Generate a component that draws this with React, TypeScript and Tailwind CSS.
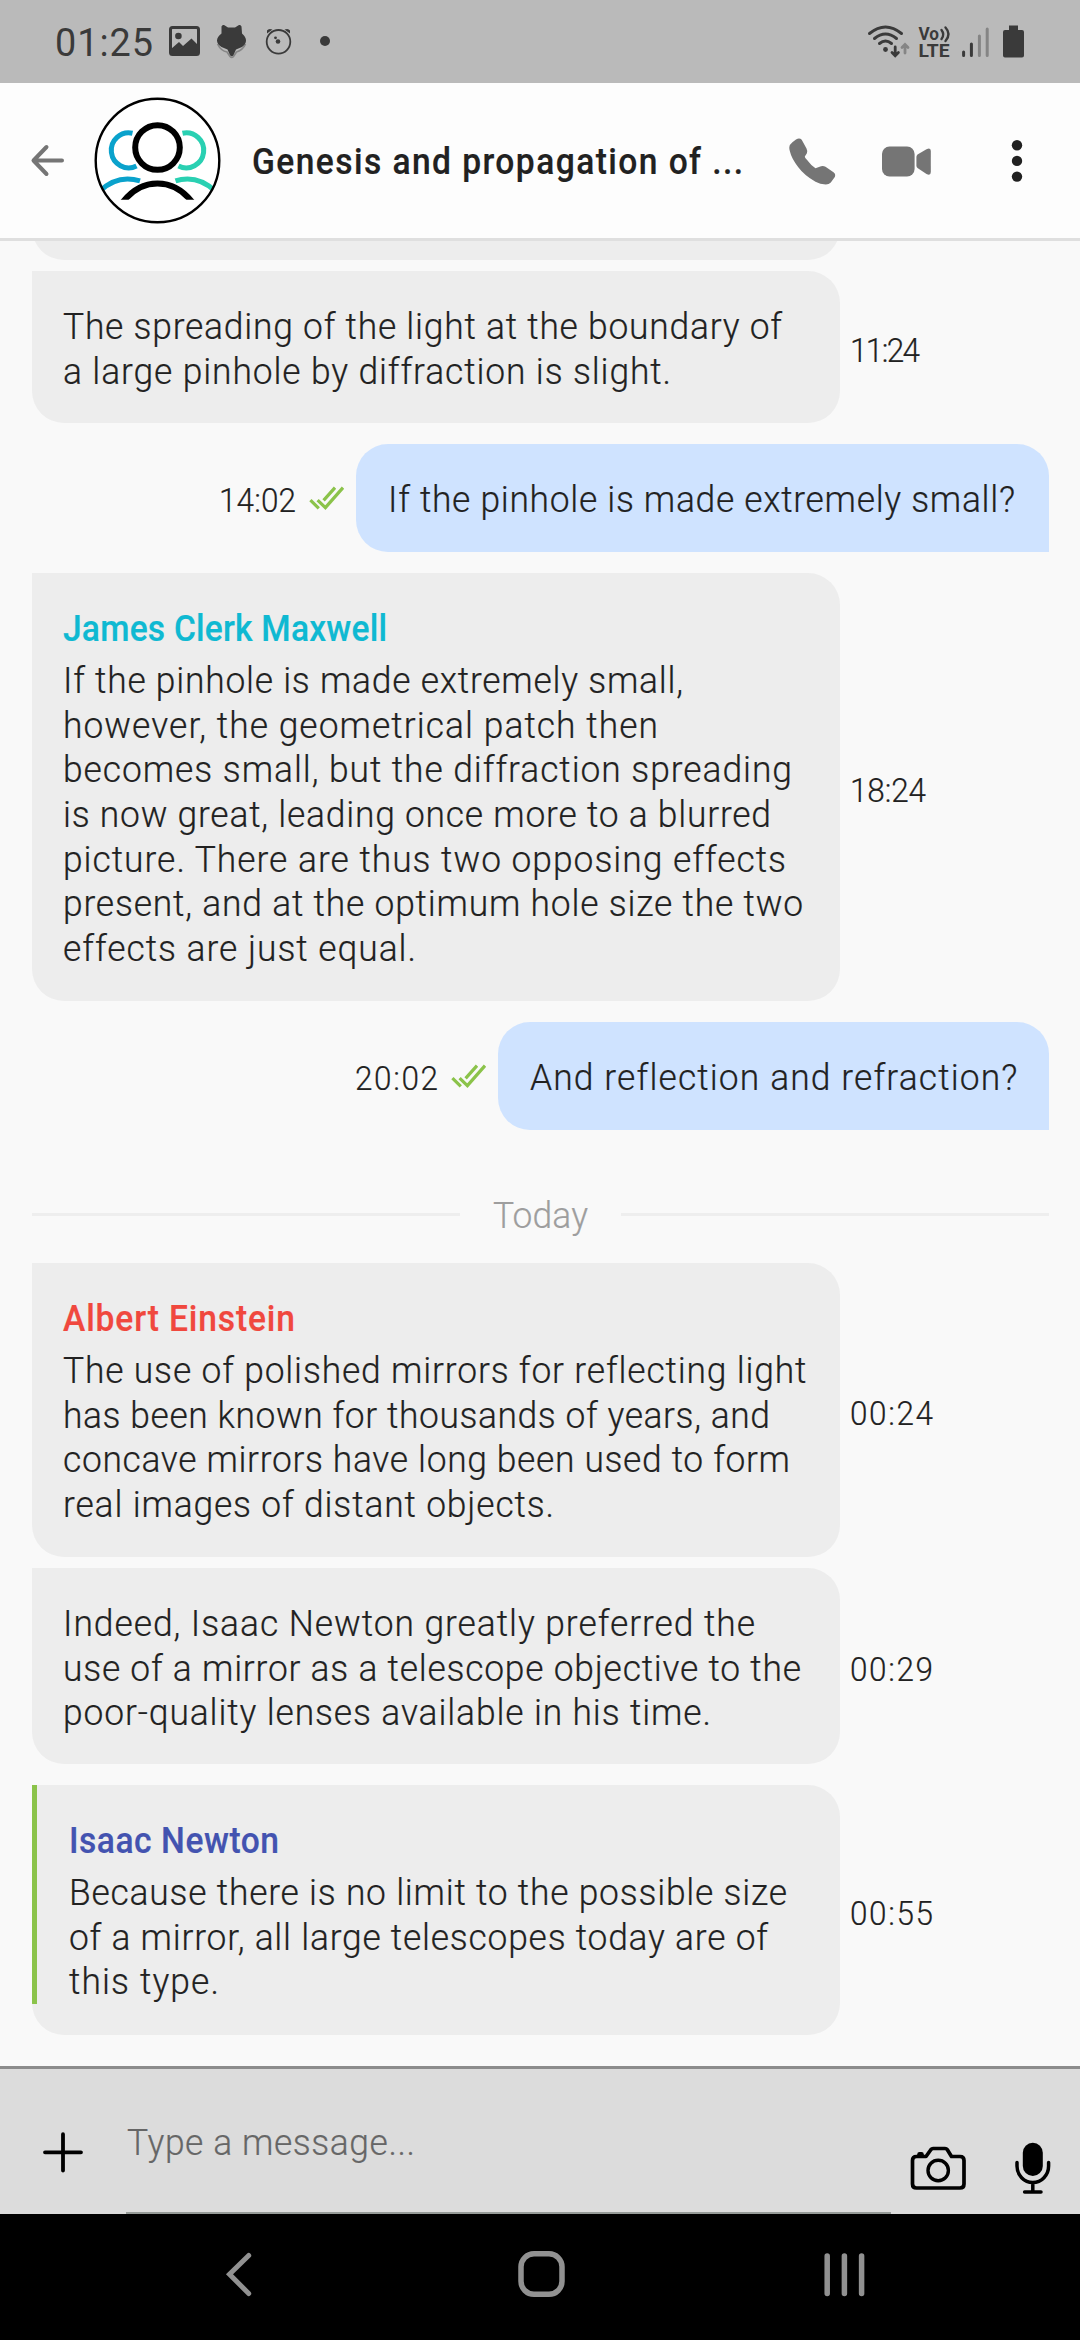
import { useLayoutEffect, useRef, type ReactNode } from "react";

/** A single line of slightly condensed text whose tracking is adjusted so that it spans `width` pixels. */
function Line({
  text,
  width,
  className = "",
  bold = false,
}: {
  text: string;
  width: number;
  className?: string;
  bold?: boolean;
}) {
  const ref = useRef<HTMLSpanElement>(null);
  useLayoutEffect(() => {
    const el = ref.current;
    if (!el) return;
    el.style.letterSpacing = "0px";
    const drawn = el.getBoundingClientRect().width;
    const scale = drawn / el.offsetWidth;
    el.style.letterSpacing = `${(width - drawn) / scale / (text.length - 1)}px`;
  }, [text, width]);
  return (
    <div className={`whitespace-nowrap ${className}`}>
      <div style={{ width }}>
        <span ref={ref} className={`inline-block origin-left ${bold ? "scale-x-92 font-medium" : "scale-x-97"}`}>
          {text}
        </span>
      </div>
    </div>
  );
}

type TextLine = [string, number];

function Received({
  lines,
  sender,
  time,
  timeWidth,
  className,
  unread = false,
}: {
  lines: TextLine[];
  sender?: { name: string; width: number; color: string };
  time: string;
  timeWidth: number;
  className: string;
  unread?: boolean;
}) {
  return (
    <div className={`flex shrink-0 items-center ${className}`}>
      <div
        className={`relative h-full w-[808px] overflow-hidden rounded-[32px] rounded-tl-none bg-[#ededed] pt-[34px] ${unread ? "pl-[37px]" : "pl-[31px]"}`}
      >
        {unread && <div className="absolute top-0 bottom-[31px] left-0 w-[5px] bg-[#8bc34a]" />}
        {sender && <Line bold text={sender.name} width={sender.width} className={`mb-[7.6px] ${sender.color}`} />}
        {lines.map(([t, w]) => (
          <Line key={t} text={t} width={w} />
        ))}
      </div>
      <Line text={time} width={timeWidth} className="ml-[10px] pt-[8px] text-[32.5px]" />
    </div>
  );
}

function Checks() {
  return (
    <svg width="36" height="24" viewBox="0 0 36 24" fill="none" stroke="#8bc34a" strokeWidth="3.2">
      <path d="M1.4 14.2 9.8 22.4M8.6 14.2 16.4 21.600 34 1.6M14.6 14.400 26 1.6" />
    </svg>
  );
}

function Sent({
  text,
  width,
  time,
  timeWidth,
  bubble,
  className,
}: {
  text: string;
  width: number;
  time: string;
  timeWidth: number;
  bubble: string;
  className: string;
}) {
  return (
    <div className={`flex h-[108px] shrink-0 items-center justify-end ${className}`}>
      <Line text={time} width={timeWidth} className="mr-[13px] pt-[6px] text-[32.5px]" />
      <Checks />
      <div className={`ml-[11px] h-full rounded-[32px] rounded-br-none bg-[#cfe3ff] pt-[34px] pl-[31.5px] ${bubble}`}>
        <Line text={text} width={width} />
      </div>
    </div>
  );
}

function Icon({ box, className = "", children }: { box: string; className?: string; children: ReactNode }) {
  const [, , w, h] = box.split(" ");
  return (
    <svg viewBox={box} width={w} height={h} fill="none" className={`shrink-0 ${className}`}>
      {children}
    </svg>
  );
}

function StatusBar() {
  return (
    <div className="flex h-[83px] shrink-0 items-start bg-[#bababa] pl-[55px] text-[#3a3a3a] [-webkit-text-stroke:0]">
      <Line text="01:25" width={98} className="w-[105px] pt-[20px] text-[39px] leading-[46px] font-normal" />
      <Icon box="160 0 180 83">
        <rect x="170.5" y="27.5" width="28" height="27" rx="2" stroke="#3a3a3a" strokeWidth="3" />
        <circle cx="178.4" cy="36" r="3.3" fill="#3a3a3a" />
        <path d="M171 49 179 42 183 46 191.500 38.5 199 46V55H171Z" fill="#3a3a3a" />
        <path d="M217.500 44Q221 51 227 52L230 56.500Q231.800 58.500 233.500 56.500L236.500 52Q243 50 245.500 44" stroke="#868686" strokeWidth="1.600" />
        <path
          d="M221.500 26.500Q222 24.500 224 25L228 27.500H235L239 25Q241 24.500 241.500 26.500L242 33.500Q246 37 246 40.500Q246 44 242 47L236 49.500L233.500 55Q231.800 57.500 230 55L227.500 49.500L221.500 47Q217 44 217 40.500Q217 37 221.500 33.500Z"
          fill="#3a3a3a"
        />
        <circle cx="278.500" cy="41.800" r="11.800" stroke="#3a3a3a" strokeWidth="1.800" />
        <path d="M267 33.500V30.500Q268.500 28 272.500 29.500ZM290 33.500V30.500Q288.500 28 284.500 29.500Z" fill="#3a3a3a" />
        <circle cx="278" cy="41.500" r="2.300" fill="#3a3a3a" />
        <circle cx="275.500" cy="37.800" r="1.400" fill="#3a3a3a" />
        <circle cx="325" cy="41" r="5" fill="#3a3a3a" />
      </Icon>
      <Icon box="860 0 180 83" className="mr-[40px] ml-auto">
        <g stroke="#3a3a3a" strokeWidth="3" strokeLinecap="round">
          <path d="M869.500 33.500Q885.500 20.500 901.500 33.500M874.500 38.500Q885.500 29.500 896.500 38.500M879.500 43.500Q885.500 38.500 891.500 43.500" />
          <path d="M895.200 47V55M892 52.500 895.200 55.700 898.400 52.500" strokeWidth="2.800" />
          <path d="M905 53V45M902 47.500 905 44.500 908 47.500" stroke="#858585" strokeWidth="2.800" />
          <path d="M963.600 52V55.500M971.400 44V55.500" />
          <path d="M979.400 36V55.500M987.200 29V55.500" stroke="#858585" />
          <path d="M941.500 30Q945 34.500 941.500 39M945.500 27.500Q951.500 34 945.500 41" strokeWidth="2.400" />
        </g>
        <circle cx="885.500" cy="49.500" r="2.400" fill="#3a3a3a" />
        <text x="918.500" y="39.500" fontSize="17.500" fontWeight="700" textLength="20.500" lengthAdjust="spacingAndGlyphs" fill="#3a3a3a">
          Vo
        </text>
        <text x="918.500" y="57" fontSize="17.500" fontWeight="700" textLength="31" lengthAdjust="spacingAndGlyphs" fill="#3a3a3a">
          LTE
        </text>
        <path d="M1009 25.500H1018V30H1022Q1024 30 1024 32V55.500Q1024 57.500 1022 57.500H1005Q1003 57.500 1003 55.500V32Q1003 30 1005 30H1009Z" fill="#3a3a3a" />
      </Icon>
    </div>
  );
}

function Header() {
  return (
    <header className="flex h-[158px] shrink-0 items-center border-b-[3px] border-[#dfdfdf] bg-[#fdfdfd]">
      <Icon box="28 140.500 40 40" className="ml-[28px]">
        <path d="M46.500 146.500 33.500 160 46.500 173.500M34 160H62" stroke="#757575" strokeWidth="4" strokeLinecap="round" strokeLinejoin="round" />
      </Icon>
      <Icon box="94 96.500 127 127" className="ml-[26px]">
        <defs>
          <clipPath id="disc">
            <circle cx="157.500" cy="160" r="62" />
          </clipPath>
          <clipPath id="shoulders">
            <path d="M94 96H221V199.300H94Z" />
          </clipPath>
        </defs>
        <circle cx="157.500" cy="160" r="61.800" fill="#fff" />
        <g strokeWidth="5" clipPath="url(#disc)">
          <g stroke="#0aa2cc">
            <path d="M132.500 132.700A17.500 17.500 0 1 0 136.500 165.500" />
            <path d="M100 190.500C109 182 118 178.500 127.500 178.500C132 178.500 136 179.200 140 180.400" />
          </g>
          <g stroke="#2ad0b2">
            <path d="M182.500 132.700A17.500 17.500 0 1 1 178.500 165.500" />
            <path d="M215 190.500C206 182 197 178.500 187.500 178.500C183 178.500 179 179.200 175.500 180.400" />
          </g>
        </g>
        <circle cx="157.500" cy="147" r="22.300" stroke="#000" strokeWidth="6" />
        <path d="M121 204C131 190 143 183 157.500 183S184 190 194 204" stroke="#000" strokeWidth="6" clipPath="url(#shoulders)" />
        <circle cx="157.500" cy="160" r="61.800" stroke="#000" strokeWidth="2.400" />
      </Icon>
      <Line bold text="Genesis and propagation of ..." width={491} className="ml-[31px] w-[500px] pt-[4px]" />
      <Icon box="780 130.500 260 60" className="ml-[28px]">
        <path
          d="M789.300 146.700Q789.500 144 792.400 141.700L796 139Q799.500 136.800 801.700 139.300L806.500 148Q807.800 150.500 806.900 152.700L804.800 156Q804.800 157.500 806.900 159.300Q811 165 815.500 167.700L819.600 166.300Q822.500 164.600 825.500 166.200L833.500 171.700Q836 173.500 834.800 176.500L830.800 182Q829 184 825.800 184Q820 183.800 815.500 181.300Q804 174.500 798.300 166.700Q791.500 158 789.800 150.500Q789.200 148.500 789.300 146.700Z"
          fill="#757575"
        />
        <rect x="882" y="146" width="32.600" height="30" rx="7.500" fill="#757575" />
        <path d="M916.400 156.500Q916.400 155 917.500 154L926.500 148.700Q930.800 146.500 930.800 150.500V171.500Q930.800 175.500 926.500 173.500L917.500 167.500Q916.400 166.700 916.400 165Z" fill="#757575" />
        <g fill="#212121">
          <circle cx="1017" cy="144.700" r="5.200" />
          <circle cx="1017" cy="160.400" r="5.200" />
          <circle cx="1017" cy="176.100" r="5.200" />
        </g>
      </Icon>
    </header>
  );
}

function Composer() {
  return (
    <footer className="flex h-[148px] shrink-0 items-stretch border-t-[3px] border-[#8c8c8c] bg-[#dcdcdc]">
      <Icon box="0 2069 126 145">
        <path d="M45 2152.300H81M63 2134.200V2170.500" stroke="#000" strokeWidth="3.800" strokeLinecap="round" />
      </Icon>
      <div className="w-[765px] border-b-2 border-[#969b98] pt-[51.500px] text-[#666]">
        <Line text="Type a message..." width={288} className="pl-px" />
      </div>
      <Icon box="891 2069 189 145">
        <g stroke="#000" strokeWidth="3.700" strokeLinecap="round" strokeLinejoin="round">
          <path d="M916.500 2156.500H926L931 2149.500Q931.800 2148.500 933 2148.500H945Q946.500 2148.500 947.200 2149.500L951.500 2156.500H960Q964 2156.500 964 2160.500V2184Q964 2188 960 2188H916.500Q912.500 2188 912.500 2184V2160.500Q912.500 2156.500 916.500 2156.500Z" />
          <circle cx="938.200" cy="2170.500" r="10.200" strokeWidth="3.400" />
          <path d="M919.500 2154.200H921.500" strokeWidth="4.500" />
          <path d="M1017 2162.500V2166A15.800 16.500 0 0 0 1048.600 2166V2162.500M1032.800 2183V2192M1024.600 2192H1041" strokeWidth="3.500" />
        </g>
        <rect x="1022.800" y="2142.800" width="20" height="33.200" rx="10" fill="#000" />
      </Icon>
    </footer>
  );
}

function NavBar() {
  return (
    <nav className="flex h-[126px] shrink-0 items-center bg-black">
      <Icon box="215 2247 50 60" className="ml-[215px]">
        <path d="M248.700 2255.500 229.500 2274.300 248.700 2293.500" stroke="#919191" strokeWidth="5" strokeLinecap="round" />
      </Icon>
      <Icon box="510 2247 64 60" className="ml-[245px]">
        <rect x="521" y="2253.800" width="41" height="40.500" rx="13" stroke="#919191" strokeWidth="5.500" />
      </Icon>
      <Icon box="815 2247 60 60" className="ml-[241px]">
        <path d="M827.200 2256V2293.500M844.400 2256V2293.500M861.600 2256V2293.500" stroke="#919191" strokeWidth="5.500" strokeLinecap="round" />
      </Icon>
    </nav>
  );
}

export default function App() {
  return (
    <div className="flex h-[2340px] w-[1080px] flex-col overflow-hidden bg-[#f9f9f9] font-['Roboto',sans-serif] text-[36.500px] leading-[44.600px] font-light text-[#212121] [-webkit-text-stroke:0.2px]">
      <StatusBar />
      <Header />
      <main className="flex h-[1825px] shrink-0 flex-col overflow-hidden pr-[31px] pl-[32px]">
        <div className="-mt-[40px] h-[59px] w-[808px] shrink-0 rounded-b-[32px] bg-[#ededed]" />
        <Received
          className="mt-[11px] h-[152px]"
          lines={[
            ["The spreading of the light at the boundary of", 719],
            ["a large pinhole by diffraction is slight.", 608],
          ]}
          time="11:24"
          timeWidth={70}
        />
        <Sent className="mt-[21px]" text="If the pinhole is made extremely small?" width={627} time="14:02" timeWidth={77} bubble="w-[693px]" />
        <Received
          className="mt-[21px] h-[428px]"
          sender={{ name: "James Clerk Maxwell", width: 324, color: "text-[#0fb9d2]" }}
          lines={[
            ["If the pinhole is made extremely small,", 620],
            ["however, the geometrical patch then", 595],
            ["becomes small, but the diffraction spreading", 729],
            ["is now great, leading once more to a blurred", 708],
            ["picture. There are thus two opposing effects", 723],
            ["present, and at the optimum hole size the two", 740],
            ["effects are just equal.", 353],
          ]}
          time="18:24"
          timeWidth={76}
        />
        <Sent className="mt-[21px]" text="And reflection and refraction?" width={487} time="20:02" timeWidth={83} bubble="w-[551px]" />
        <div className="mt-[62px] flex h-[45px] shrink-0 items-center justify-between text-[#9e9e9e]">
          <div className="h-[3px] w-[428px] bg-[#eeeeee]" />
          <Line text="Today" width={95} className="pt-[4px]" />
          <div className="h-[3px] w-[428px] bg-[#eeeeee]" />
        </div>
        <Received
          className="mt-[26px] h-[294px]"
          sender={{ name: "Albert Einstein", width: 232, color: "text-[#f0483e]" }}
          lines={[
            ["The use of polished mirrors for reflecting light", 743],
            ["has been known for thousands of years, and", 707],
            ["concave mirrors have long been used to form", 727],
            ["real images of distant objects.", 491],
          ]}
          time="00:24"
          timeWidth={83}
        />
        <Received
          className="mt-[11px] h-[196px]"
          lines={[
            ["Indeed, Isaac Newton greatly preferred the", 692],
            ["use of a mirror as a telescope objective to the", 738],
            ["poor-quality lenses available in his time.", 648],
          ]}
          time="00:29"
          timeWidth={83}
        />
        <Received
          unread
          className="mt-[21px] h-[250px]"
          sender={{ name: "Isaac Newton", width: 210, color: "text-[#4353b0]" }}
          lines={[
            ["Because there is no limit to the possible size", 718],
            ["of a mirror, all large telescopes today are of", 699],
            ["this type.", 150],
          ]}
          time="00:55"
          timeWidth={83}
        />
      </main>
      <Composer />
      <NavBar />
    </div>
  );
}
